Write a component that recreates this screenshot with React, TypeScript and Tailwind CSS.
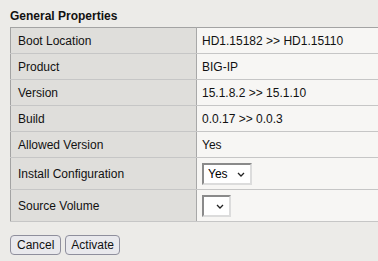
import { ChangeEvent, useState } from 'react';

interface PropRow {
  label: string;
  value?: string;
  kind?: 'text' | 'select';
  options?: string[];
}

const rows: PropRow[] = [
  { label: 'Boot Location', value: 'HD1.15182 >> HD1.15110' },
  { label: 'Product', value: 'BIG-IP' },
  { label: 'Version', value: '15.1.8.2 >> 15.1.10' },
  { label: 'Build', value: '0.0.17 >> 0.0.3' },
  { label: 'Allowed Version', value: 'Yes' },
  { label: 'Install Configuration', kind: 'select', value: 'Yes', options: ['Yes', 'No'] },
  { label: 'Source Volume', kind: 'select', value: '', options: [''] },
];

function Chevron() {
  return (
    <svg width="8" height="5" viewBox="0 0 8 5" className="pointer-events-none absolute right-[7px] top-[9px]">
      <path d="M1 1 L4 4 L7 1" fill="none" stroke="#222" strokeWidth="1.3" />
    </svg>
  );
}

function PropSelect(props: { value: string; options: string[]; width: string }) {
  const [val, setVal] = useState(props.value);
  return (
    <div className={`relative h-[22px] ${props.width}`}>
      <select
        value={val}
        onChange={(e: ChangeEvent<HTMLSelectElement>) => setVal(e.target.value)}
        className="h-full w-full appearance-none border-2 border-t-[#8a8a8a] border-l-[#8a8a8a] border-b-[#dcdcdc] border-r-[#dcdcdc] bg-white pl-[4px] text-[12px] leading-[16px] text-black outline-none"
      >
        {props.options.map((o) => (
          <option key={o} value={o}>
            {o}
          </option>
        ))}
      </select>
      <Chevron />
    </div>
  );
}

export default function App() {
  return (
    <div className="min-h-[261px] w-full bg-[#ecebe8] text-[12px] text-[#111]" style={{ fontFamily: '"Liberation Sans", Arial, sans-serif' }}>
      <div className="h-[27px] pl-[10px] pt-[9px] font-bold leading-[14px]">General Properties</div>
      <table className="ml-[10px] w-[368px] border-collapse border-t border-l border-b border-[#a3a3a3]">
        <tbody>
          {rows.map((r) => (
            <tr key={r.label} className={r.kind === 'select' ? 'h-[32px]' : 'h-[26px]'}>
              <td className="w-[186px] border-b border-r border-b-[#c6c6c6] border-r-[#a8a8a8] bg-[#dfdedb] pl-[7px] align-middle">
                {r.label}
              </td>
              <td className="border-b border-[#c6c6c6] bg-[#f7f6f4] pl-[5px] align-middle">
                {r.kind === 'select' ? (
                  <PropSelect
                    value={r.value ?? ''}
                    options={r.options ?? []}
                    width={r.value ? 'w-[50px]' : 'w-[29px]'}
                  />
                ) : (
                  r.value
                )}
              </td>
            </tr>
          ))}
        </tbody>
      </table>
      <div className="flex gap-[4px] pl-[10px] pt-[13px]">
        <button className="h-[20px] rounded-[4px] border border-[#8f8f9d] bg-[#e9e9ed] px-[6px] leading-[16px]">Cancel</button>
        <button className="h-[20px] rounded-[4px] border border-[#8f8f9d] bg-[#e9e9ed] px-[5px] leading-[16px]">Activate</button>
      </div>
    </div>
  );
}
